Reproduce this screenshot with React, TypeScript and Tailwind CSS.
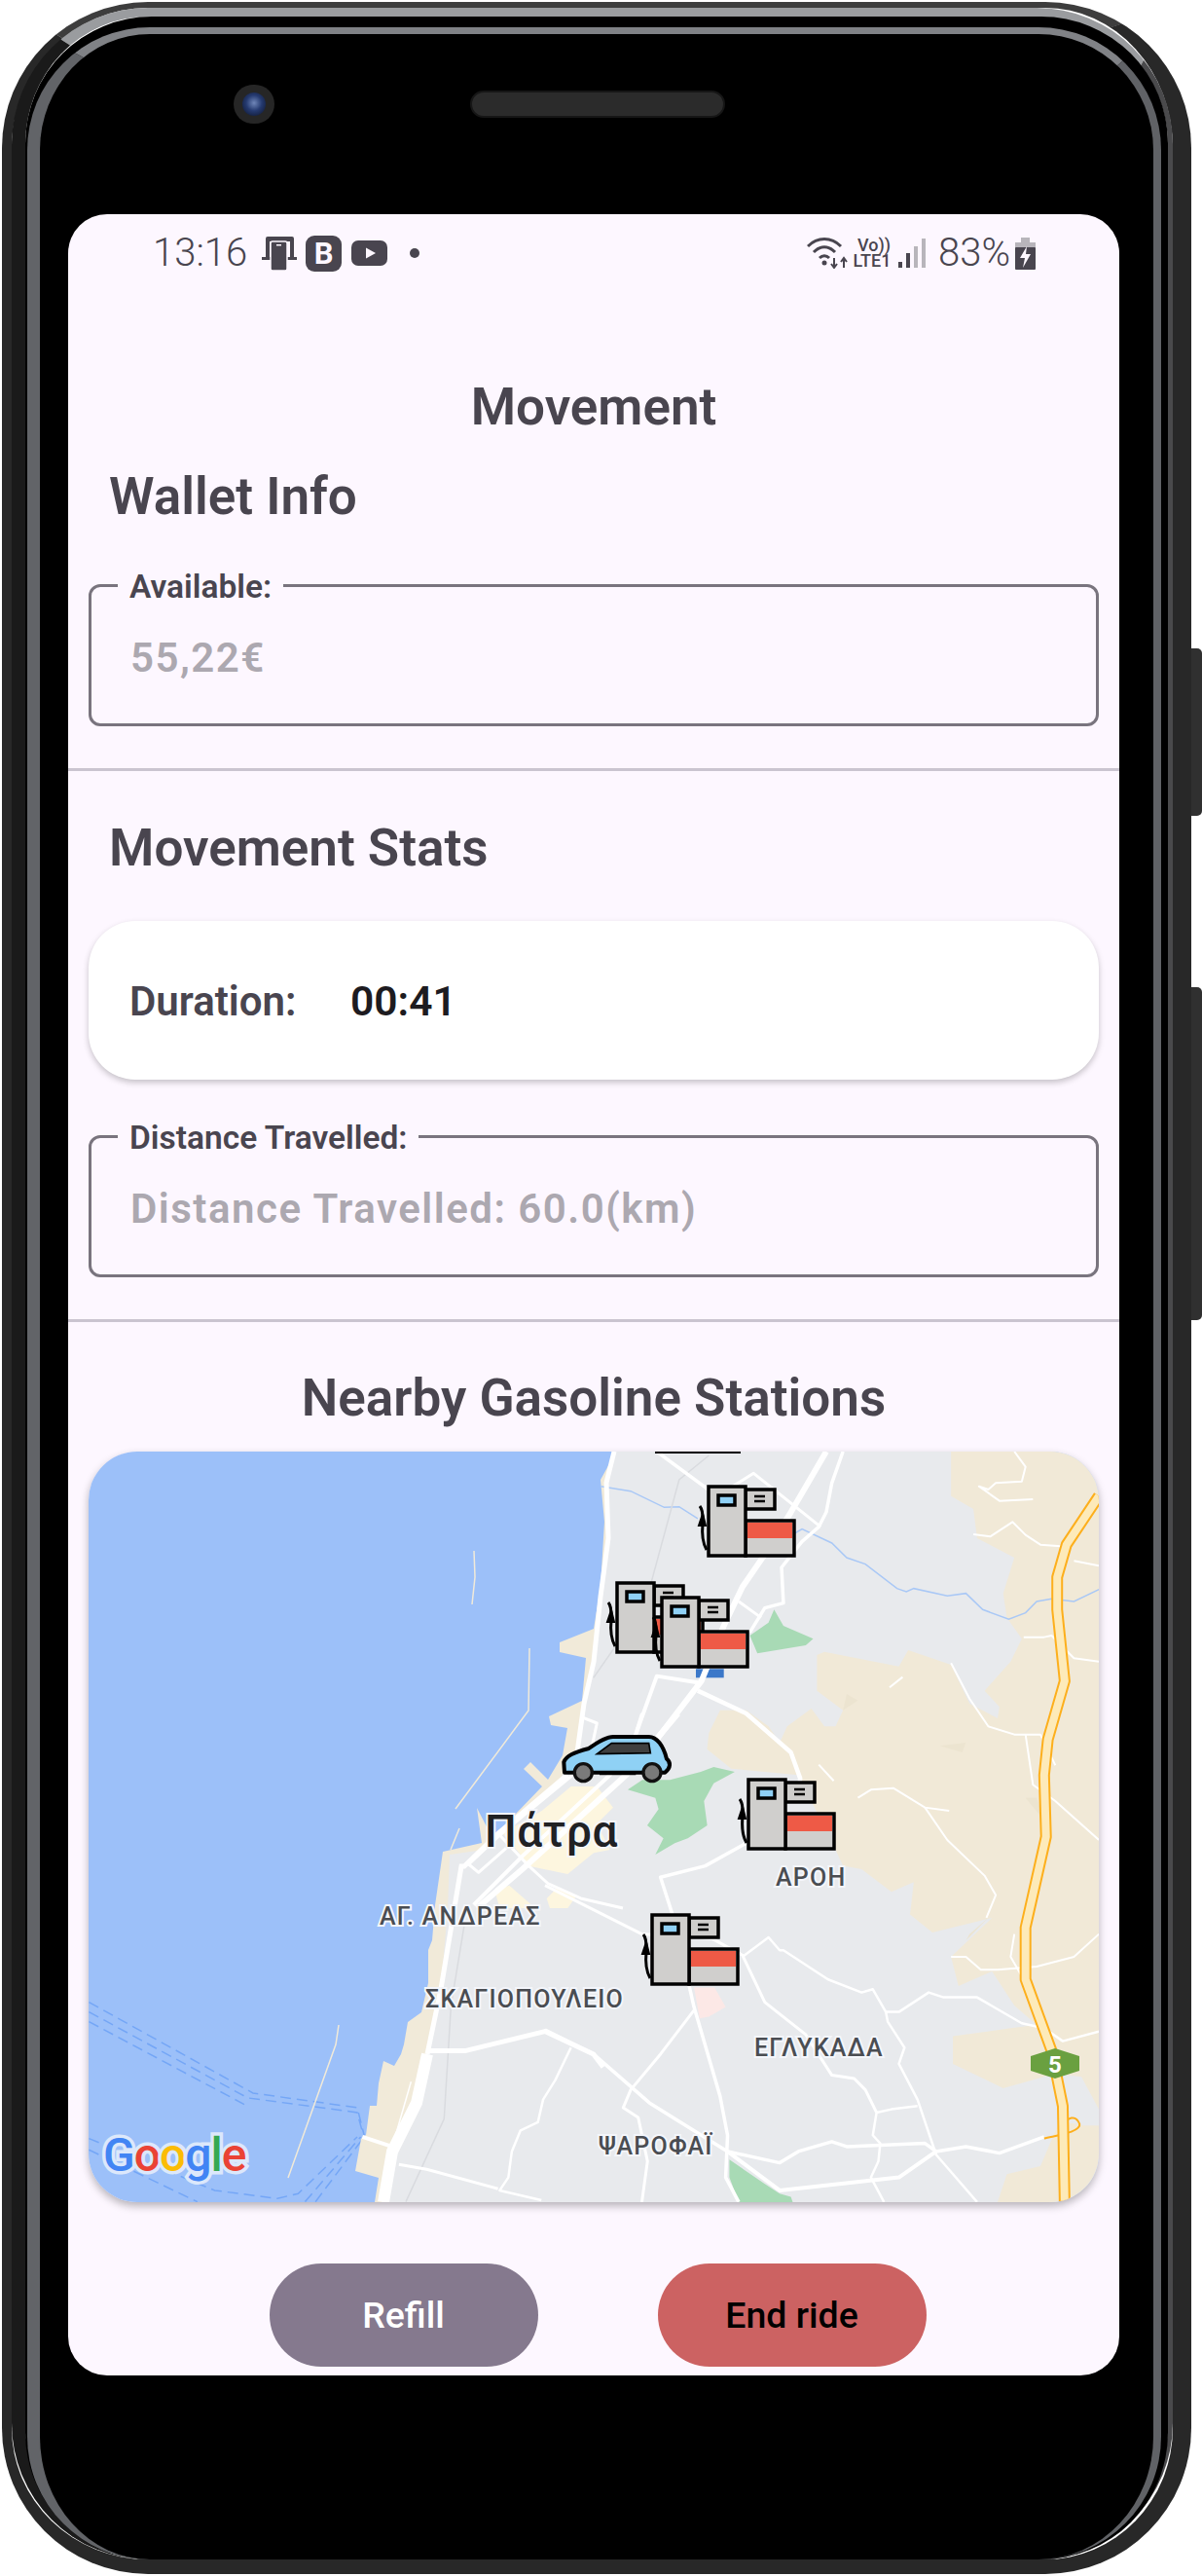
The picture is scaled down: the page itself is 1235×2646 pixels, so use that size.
const STROKE = "non-scaling-stroke" as const;

// map paths are written in zoomed tile coordinates, so they go through these groups
const EAST = "translate(560 1480) scale(0.3827 0.3333)";
const WEST = "translate(60 1480) scale(0.357 0.3333)";
const CITY = "translate(440 1760) scale(0.3333)";

const eastRoads: [string, number][] = [
  ["755,33 660,220 590,350 530,450 480,570 420,740 300,920", 6],
  ["800,33 770,130 755,220 735,265 690,310 635,390 640,500 590,515 550,590", 3.5],
  ["300,33 450,160", 3.5],
  ["450,160 490,150 560,100 740,265", 3],
  ["520,495 580,545", 3],
  ["410,745 300,725 245,900", 4],
  ["410,770 540,840 660,960 685,1040 680,1100", 4.5],
  ["540,1240 430,1310 310,1345 345,1470 400,1745 470,2020 490,2140 485,2270 520,2346", 3.5],
  ["0,1370 260,1520 450,1535 530,1585 590,1730 700,1830 770,1955 830,1965 860,2000 890,2070", 3],
  ["530,1590 600,1530 630,1570 640,1570 760,1660 850,1700 880,1690 915,1760 920,1790 965,1870 950,1920 1000,2030 1050,2200 1160,2346", 2.5],
  ["915,1760 950,1760 1030,1700 1070,1715 1160,1715 1280,1795 1340,1810 1390,1850 1487,1820", 2.5],
  ["400,1755 310,1890 230,2000 210,2055 250,2085 275,2220 260,2346", 3],
  ["0,1815 130,1890 280,2040 490,2190 630,2225 680,2190 770,2160 810,2175 1020,2165 1050,2190 1130,2175 1220,2195 1340,2145", 3.5],
  ["490,2190 630,2310 950,2270 1050,2190", 4],
  ["890,2070 880,2140 900,2165 895,2220 875,2270 910,2346", 2.5],
  ["890,2070 930,2060 1000,2050", 2.5],
  ["1260,33 1290,80 1280,125 1210,130 1190,150 1165,140 1220,185 1310,180", 2],
  ["1150,288 1195,295 1255,250 1290,290 1330,320 1385,325", 2],
  ["1420,370 1487,385", 2],
  ["1285,605 1340,605 1360,600 1420,670 1487,680", 2],
  ["1090,685 1140,795 1190,880 1260,905 1330,905 1370,1000", 2],
  ["1290,905 1310,1060 1370,1110 1487,1230", 2],
  ["840,1100 875,1075 935,1070 1020,1130 1085,1140", 2],
  ["1020,1130 1080,1230 1180,1340 1210,1400 1185,1470", 2],
  ["1090,1590 1130,1590 1170,1630 1215,1630 1320,1620 1420,1590 1487,1520", 2],
  ["925,760 960,728", 2],
  ["735,998 775,1048", 2],
  ["1260,1520 1250,1590 1300,1690", 2],
];

const westRoads: [string, number][] = [
  ["1060,1880 1170,1880 1400,1820 1540,1890 1568,1930", 5],
  ["1475,1870 1430,1970 1395,2030 1380,2100 1330,2125 1305,2190 1295,2270 1270,2310 1390,2340", 2.5],
  ["980,2230 1060,2245 1265,2305", 3],
  ["875,2145 960,2175", 4],
  ["1015,1975 965,2160", 1.5],
];

const cityRoads: [string, number][] = [
  ["770,0 610,190 290,480 150,600", 6],
  ["660,0 635,80 560,190 290,440 140,590", 4],
  ["445,190 215,380 125,465 155,490 240,415", 3],
  ["215,370 310,470 370,525 470,570 600,600", 3],
  ["470,10 520,30 505,100", 3],
];

function Pump({ x, y }: { x: number; y: number }) {
  return (
    <g transform={`translate(${x} ${y})`} stroke="#000" strokeWidth="3.5">
      <path d="M-9 20C-5 25-6 32-6 38C-7 48-6 58-2 65" fill="none" strokeWidth="3" />
      <path d="M-6 28L-3 40H-10Z" fill="#000" strokeWidth="2" />
      <rect x="38" y="3" width="30" height="20" fill="#cfcecc" />
      <path d="M47 10H58M47 15H58" strokeWidth="2.5" />
      <rect x="38" y="35" width="50" height="36" fill="#d0cfcd" />
      <rect x="40" y="37" width="46" height="16" fill="#ee5a46" stroke="none" />
      <rect x="0" y="0" width="38" height="71" fill="#d0cfcd" />
      <rect x="10" y="9" width="17" height="10" fill="#8fd0f5" />
    </g>
  );
}

function Halo({ x, y, size = 25, spacing = 1.25, color = "#4a4d52", children }: { x: number; y: number; size?: number; spacing?: number; color?: string; children: string }) {
  return (
    <text x={x} y={y} fontSize={size} fontWeight="500" letterSpacing={spacing} fill={color} stroke="#f4f6fb" strokeWidth="4" paintOrder="stroke" fontFamily="Roboto, sans-serif">
      {children}
    </text>
  );
}

function MapDrawing() {
  return (
    <svg viewBox="91 1491 1038 771" className="block h-full w-full">
      <rect x="91" y="1491" width="1038" height="771" fill="#9cc0f9" />

      {/* ferry lines */}
      <g transform={WEST} fill="none" stroke="#74a6f6" strokeWidth="1.5" strokeDasharray="11 6">
        <polyline vectorEffect={STROKE} points="88,1730 560,2010 860,2055 880,2140" />
        <polyline vectorEffect={STROKE} points="88,1760 545,2025 860,2070 875,2130" />
        <polyline vectorEffect={STROKE} points="88,1790 535,2045" />
        <polyline vectorEffect={STROKE} points="88,2150 450,2310 630,2335 690,2320 860,2145" />
        <polyline vectorEffect={STROKE} points="88,2185 400,2345" />
        <polyline vectorEffect={STROKE} points="710,2345 870,2145" />
        <polyline vectorEffect={STROKE} points="740,2345 880,2145" />
      </g>

      {/* shore and breakwaters */}
      <polygon fill="#f1ead9" points="633,1491 617,1520 621,1563 617,1630 610,1673 575,1687 575,1697 602,1703 598,1747 564,1763 566,1772 583,1775 578,1803 563,1828 545,1810 538,1817 557,1835 530,1863 507,1890 490,1857 495,1893 455,1902 447,1957 444,1993 440,2003 440,2037 433,2067 419,2077 415,2100 412,2110 405,2122 394,2117 389,2140 387,2163 380,2163 376,2193 371,2197 365,2230 389,2237 385,2262 700,2262 700,1491" />
      <g fill="none" stroke="#f1ead9" strokeWidth="1.5">
        <polyline points="544,1693 543,1757 468,1858" />
        <polyline points="487,1593 488,1620 485,1648" />
        <polyline points="348,2080 345,2100 296,2237" />
        <polyline points="472,1878 463,1900" />
      </g>

      {/* land */}
      <polygon fill="#e8eaed" points="631,1491 623,1523 625,1580 617,1640 610,1707 600,1750 593,1800 570,1835 540,1865 510,1888 497,1900 462,1905 460,1960 453,2043 439,2110 428,2160 403,2210 394,2262 1129,2262 1129,1491" />

      {/* hills */}
      <g transform={EAST} fill="#f1e9d7">
        <path d="M1090 33L1090 170L1150 210L1160 300L1260 360L1230 470L1240 545L1280 610L1250 680L1180 770L1220 820L1215 855L1140 810L1090 690L975 645L950 695L750 650L730 660L730 770L800 830L780 880L750 880L715 825L650 880L630 930L600 880L540 830L470 830L440 900L435 950L500 1010L680 1030L780 1260L800 1310L850 1320L930 1390L990 1360L980 1460L1040 1515L1200 1470L1090 1590L1110 1680L1200 1635L1260 1740L1320 1800L1250 1810L1095 1835L1095 1920L1230 1995L1370 1950L1440 1960L1487 2060L1487 33Z" />
        <path d="M1215 2346L1240 2260L1330 2235L1380 2100L1487 2110L1487 2346Z" />
        <path d="M1430 2070H1487V2110H1440Z" fill="#e8eaed" />
        <path d="M800 830L840 800L810 780ZM1060 940L1130 930L1120 960ZM1130 1540L1190 1470L1140 1520ZM1290 1100L1340 1170L1320 1100Z" fill="#ece4d0" />
      </g>

      {/* city */}
      <g transform={CITY} fill="#fdf6df">
        <path d="M440 225L350 300L230 370L280 430L310 470L430 495L510 430L560 420L520 340L570 290L520 225Z" />
        <path d="M205 545L250 530L330 600H220ZM365 570L400 535L455 565L430 600H375Z" />
      </g>

      {/* parks */}
      <g transform={CITY} fill="#a8dab5">
        <path d="M615 235L660 205L745 205L840 180L880 165L945 180L880 215L850 270L860 345L800 385L760 400L700 435L725 385L675 345L710 295L700 260Z" />
      </g>
      <g transform={EAST}>
        <path d="M550 600L600 560L615 520L640 570L720 610L700 630L570 655Z" fill="#a8dab5" />
        <path d="M495 2215L590 2290L630 2320L660 2330L665 2346L520 2346L495 2270Z" fill="#a8dab5" />
        <path d="M400 1685L455 1685L485 1745L440 1775L415 1780Z" fill="#fce8e6" />
        <rect x="405" y="703" width="75" height="27" fill="#3b78c9" />
      </g>

      {/* river */}
      <g transform={EAST} fill="none" stroke="#a9c8f6" strokeWidth="1.5">
        <polyline vectorEffect={STROKE} points="150,140 230,155 320,205 360,203 410,240" />
        <polyline vectorEffect={STROKE} points="670,285 690,272 770,315 810,360 860,380 945,455 970,465 990,455 1080,478 1130,470 1175,520 1245,550 1290,530 1320,495 1360,487 1420,495 1487,458" />
      </g>

      {/* railway */}
      <g transform={EAST} fill="none" stroke="#d9dbdf" strokeWidth="1.5">
        <polyline vectorEffect={STROKE} points="440,45 360,120 270,500 130,730" />
      </g>
      <g transform={WEST} fill="none" stroke="#d9dbdf" strokeWidth="1.5">
        <polyline vectorEffect={STROKE} points="1170,1480 1130,1740 1110,2090 1000,2345" />
      </g>

      {/* roads */}
      <polyline points="631,1491 623,1523 625,1580 617,1640 610,1707 600,1750 593,1800" fill="none" stroke="#fff" strokeWidth="5" />
      <polyline points="583,1823 512,1883 477,1917 474,1917 464,1977 453,2043 439,2110" fill="none" stroke="#fff" strokeWidth="5" />
      <polyline points="439,2110 428,2160 403,2210 394,2262" fill="none" stroke="#fff" strokeWidth="12" />
      {[{ t: EAST, r: eastRoads }, { t: WEST, r: westRoads }, { t: CITY, r: cityRoads }].map(({ t, r }) => (
        <g key={t} transform={t} fill="none" stroke="#fff" strokeLinejoin="round">
          {r.map(([points, w]) => (
            <polyline key={points} points={points} strokeWidth={w} vectorEffect={STROKE} />
          ))}
        </g>
      ))}

      {/* motorway */}
      <g transform={EAST} fill="none" strokeLinejoin="round">
        <path d="M1340 2150C1375 2140 1440 2130 1435 2105C1425 2075 1400 2085 1395 2110" stroke="#fdaf1c" strokeWidth="2" vectorEffect={STROKE} />
        <polyline points="1487,170 1400,320 1375,420 1375,520 1395,740 1350,920 1340,1030 1345,1220 1290,1500 1290,1660 1360,1880 1390,2050 1395,2346" stroke="#fdaf1c" strokeWidth="12" vectorEffect={STROKE} />
        <polyline points="1487,170 1400,320 1375,420 1375,520 1395,740 1350,920 1340,1030 1345,1220 1290,1500 1290,1660 1360,1880 1390,2050 1395,2346" stroke="#fdeab9" strokeWidth="8" vectorEffect={STROKE} />
      </g>
      <polygon points="1059,2112 1084,2104 1109,2112 1109,2127 1084,2135 1059,2127" fill="#6aa040" />
      <text x="1084" y="2129" textAnchor="middle" fontSize="24" fontWeight="700" fill="#fff" fontFamily="Roboto, sans-serif">5</text>

      <rect x="673" y="1491" width="88" height="2" fill="#000" />

      <Halo x={390} y={1977}>ΑΓ. ΑΝΔΡΕΑΣ</Halo>
      <Halo x={437} y={2062}>ΣΚΑΓΙΟΠΟΥΛΕΙΟ</Halo>
      <Halo x={797} y={1937}>ΑΡΟΗ</Halo>
      <Halo x={775} y={2112}>ΕΓΛΥΚΑΔΑ</Halo>
      <Halo x={615} y={2213}>ΨΑΡΟΦΑΪ</Halo>
      <Halo x={498} y={1897} size={46} spacing={0.5} color="#202124">Πάτρα</Halo>

      <Pump x={728} y={1527} />
      <Pump x={634} y={1626} />
      <Pump x={680} y={1641} />
      <Pump x={769} y={1828} />
      <Pump x={670} y={1967} />

      {/* car */}
      <g transform={CITY}>
        <path d="M420 182L418 150C425 130 450 120 495 108C520 90 550 72 570 72L680 72C705 72 725 100 735 140C748 150 748 168 730 182L420 182Z" fill="#8fd1f5" stroke="#000" strokeWidth="12" strokeLinejoin="round" />
        <path d="M520 125L565 92L680 92L685 122Z" fill="#3f3f3f" stroke="#000" strokeWidth="5" />
        <path d="M528 185H640" stroke="#000" strokeWidth="10" />
        <circle cx="478" cy="182" r="27" fill="#7a7a7a" stroke="#111" strokeWidth="10" />
        <circle cx="690" cy="182" r="27" fill="#7a7a7a" stroke="#111" strokeWidth="10" />
      </g>

      {/* logo */}
      <text x="106" y="2230" fontSize="48" fontWeight="500" letterSpacing="-1" stroke="#dce8fb" strokeWidth="7" paintOrder="stroke" fontFamily="Roboto, sans-serif">
        <tspan fill="#4285f4">G</tspan>
        <tspan fill="#ea4335">o</tspan>
        <tspan fill="#fbbc05">o</tspan>
        <tspan fill="#4285f4">g</tspan>
        <tspan fill="#34a853">l</tspan>
        <tspan fill="#ea4335">e</tspan>
      </text>
    </svg>
  );
}

function StatusBar() {
  return (
    <div className="mt-[20px] flex h-[40px] items-center justify-between pl-[87px] pr-[86px] text-[#49454f]">
      <div className="flex items-center">
        <span className="text-[40px] leading-[40px] font-light">13:16</span>
        <svg width="36" height="35" viewBox="0 0 36 35" className="ml-[15px]">
          <path d="M4 2a2 2 0 0 1 2-2h25a2 2 0 0 1 2 2v21h-4V5H8v18H4Z" fill="#49454f" />
          <rect x="0" y="21" width="36" height="3" fill="#49454f" />
          <rect x="9" y="5" width="17" height="30" rx="2" fill="#49454f" stroke="#fdf7ff" strokeWidth="1.5" />
          <rect x="15" y="8" width="5" height="1.5" fill="#fdf7ff" />
        </svg>
        <span className="ml-[9px] flex h-[37px] w-[37px] items-center justify-center rounded-[9px] bg-[#49454f] text-[31px] leading-none font-bold text-[#fdf7ff]">
          B
        </span>
        <svg width="37" height="26" viewBox="0 0 37 26" className="ml-[10px]">
          <rect width="37" height="26" rx="7" fill="#49454f" />
          <path d="M15 7.5L25 13L15 18.5Z" fill="#fdf7ff" />
        </svg>
        <span className="ml-[23px] h-[10px] w-[10px] rounded-full bg-[#49454f]" />
      </div>
      <div className="flex items-center">
        <svg width="42" height="32" viewBox="0 0 42 32">
          <g fill="none" stroke="#49454f" strokeWidth="3">
            <path d="M1 9C11-1 25-1 35 9" />
            <path d="M7 15C14 8 22 8 29 15" />
            <path d="M13 21C16 18 20 18 23 21" />
          </g>
          <circle cx="18" cy="26" r="2.5" fill="#49454f" />
          <path d="M28 21V31M25 27L28 31L31 27M38 31V21M35 25L38 21L41 25" fill="none" stroke="#49454f" strokeWidth="2" />
        </svg>
        <div className="ml-[5px] flex w-[40px] flex-col items-center text-[18px] leading-[16px] font-medium">
          <span className="pl-[4px]">Vo))</span>
          <span>LTE1</span>
        </div>
        <svg width="28" height="30" viewBox="0 0 28 30" className="ml-[7px]">
          <rect x="0" y="24" width="4" height="6" fill="#49454f" />
          <rect x="8" y="15" width="4" height="15" fill="#49454f" />
          <rect x="16" y="8" width="4" height="22" fill="#b8b5bb" />
          <rect x="24" y="0" width="4" height="30" fill="#b8b5bb" />
        </svg>
        <span className="ml-[13px] text-[40px] leading-[40px] font-light">83%</span>
        <svg width="21" height="33" viewBox="0 0 21 33" className="ml-[5px]">
          <rect x="6" y="0" width="9" height="5" fill="#b8b5bb" />
          <rect x="0" y="5" width="21" height="6" fill="#b8b5bb" />
          <rect x="0" y="10" width="21" height="23" rx="1" fill="#49454f" />
          <path d="M12 9L5 21H10L8 31L16 17H11Z" fill="#fdf7ff" />
        </svg>
      </div>
    </div>
  );
}

function OutlinedField({ label, value, className }: { label: string; value: string; className: string }) {
  return (
    <div className={`relative mx-[21px] flex h-[146px] items-start rounded-[12px] border-[3px] border-[#79747e] pl-[40px] pt-[45px] ${className}`}>
      <span className="absolute -top-[18px] left-[27px] bg-[#fdf7ff] px-[12px] text-[33.5px] leading-[36px] font-semibold text-[#49454f]">
        {label}
      </span>
      <span className="text-[42px] leading-[56px] font-semibold tracking-[1.5px] text-[#aca8b0]">{value}</span>
    </div>
  );
}

export default function App() {
  return (
    <div className="h-[2646px] w-[1235px] overflow-hidden bg-white font-['Roboto',sans-serif]">
      <div className="relative ml-[2px] mt-[2px] h-[2642px] w-[1222px]">
        {/* side keys */}
        <div className="absolute -right-[11px] top-[664px] h-[172px] w-[12px] rounded-r-[5px] bg-[#303030]" />
        <div className="absolute -right-[11px] top-[1012px] h-[342px] w-[12px] rounded-r-[5px] bg-[#303030]" />

        <div className="relative h-full w-full rounded-[150px] border-b-[15px] border-l-[10px] border-r-[19px] border-t-[6px] border-[#282828] border-t-[#3d3d3d]">
          <div className="h-full rounded-[140px] border-b-0 border-l-[14px] border-r-[5px] border-t-[9px] border-l-[#1a1a1a] border-r-[#4a4a4c] border-t-[#9a9c9f]">
            <div className="h-full rounded-[130px] border-l-[2px] border-r-[7px] border-t-[11px] border-black bg-black">
              <div className="relative h-full rounded-[126px] border-b-0 border-l-[13px] border-r-[8px] border-t-[7px] border-l-[#626468] border-r-[#606266] border-t-[#808286] bg-black pl-[29px] pr-[35px] pt-[185px]">
                {/* camera */}
                <div className="absolute left-[199px] top-[52px] flex h-[40px] w-[42px] items-center justify-center rounded-full bg-[#262626]">
                  <div className="h-[24px] w-[24px] rounded-full bg-[radial-gradient(circle_at_50%_45%,#6f86b8_0%,#253a70_45%,#0a1024_100%)]" />
                </div>
                {/* earpiece */}
                <div className="absolute left-[442px] top-[58px] h-[28px] w-[262px] rounded-full border-[2px] border-[#161616] bg-[#2b2b2b]" />

                <div className="flex h-[2220px] w-[1080px] flex-col overflow-hidden rounded-[40px] bg-[#fdf7ff]">
                  <StatusBar />

                  <h1 className="mt-[106px] text-center text-[53px] leading-[64px] font-semibold text-[#49454f]">Movement</h1>
                  <h2 className="mt-[28px] pl-[42px] text-[53px] leading-[64px] font-semibold text-[#49454f]">Wallet Info</h2>

                  <OutlinedField label="Available:" value="55,22€" className="mt-[58px] shrink-0" />
                  <div className="mt-[43px] h-[3px] shrink-0 bg-[#cac4d0]" />

                  <h2 className="mt-[47px] pl-[42px] text-[53px] leading-[64px] font-semibold text-[#49454f]">Movement Stats</h2>

                  <div className="mx-[21px] mt-[43px] flex h-[163px] shrink-0 items-center rounded-[48px] bg-white pl-[42px] pt-[2px] shadow-[0_3px_6px_rgba(0,0,0,0.22)]">
                    <span className="w-[227px] text-[42px] font-semibold text-[#49454f]">Duration:</span>
                    <span className="text-[42.5px] font-semibold text-[#1d1b20]">00:41</span>
                  </div>

                  <OutlinedField label="Distance Travelled:" value="Distance Travelled: 60.0(km)" className="mt-[57px] shrink-0" />
                  <div className="mt-[43px] h-[3px] shrink-0 bg-[#cac4d0]" />

                  <h2 className="mt-[46px] text-center text-[53px] leading-[64px] font-semibold text-[#49454f]">Nearby Gasoline Stations</h2>

                  <div className="mx-[21px] mt-[23px] h-[771px] shrink-0 overflow-hidden rounded-[50px] shadow-[0_4px_8px_rgba(0,0,0,0.28)]">
                    <MapDrawing />
                  </div>

                  <div className="mt-[63px] flex justify-center gap-[123px] pl-[8px]">
                    <button className="h-[106px] w-[276px] rounded-full bg-[#85798e] text-[37.5px] font-medium text-white">Refill</button>
                    <button className="h-[106px] w-[276px] rounded-full bg-[#cc6262] text-[37.5px] font-medium text-black">End ride</button>
                  </div>
                </div>
              </div>
            </div>
          </div>
        </div>
      </div>
    </div>
  );
}
